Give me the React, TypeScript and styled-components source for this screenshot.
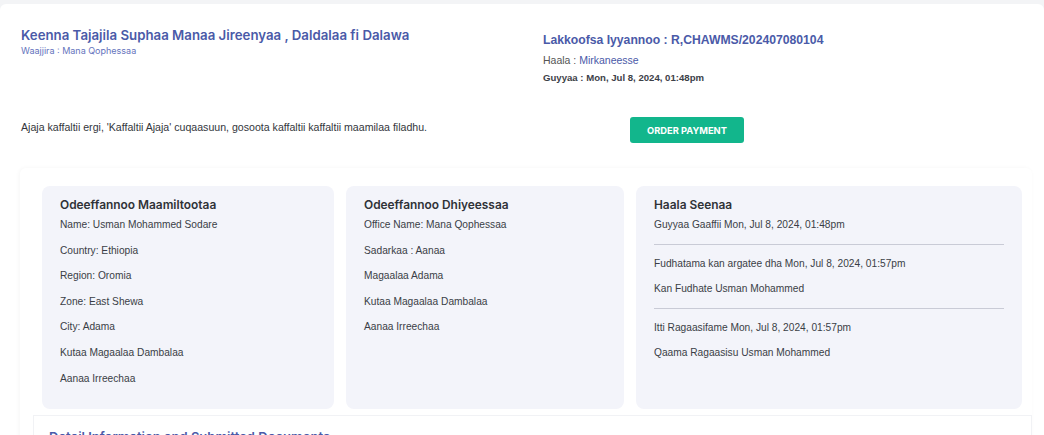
import React from 'react';
import styled, { createGlobalStyle } from 'styled-components';

const colors = {
  blue: '#4a5aa8',
  blueLight: '#6574bd',
  text: '#3a3e46',
  panel: '#f3f4fa',
  green: '#12b68c',
  rule: '#c9cbd6',
};

const GlobalStyle = createGlobalStyle`
  html, body {
    margin: 0;
    padding: 0;
    background: #f3f4f6;
  }
  body {
    font-family: 'Liberation Sans', Arial, sans-serif;
    color: ${colors.text};
  }
  * { box-sizing: border-box; }
`;

const Page = styled.div`
  margin-top: 4px;
  height: 431px;
  overflow: hidden;
  background: white;
  border-radius: 6px 6px 0 0;
`;

const Header = styled.div`
  display: grid;
  grid-template-columns: 522px 1fr;
  padding: 22px 0 0 21px;
`;

const Title = styled.h1`
  margin: 0;
  font-family: Inter, 'Noto Sans', sans-serif;
  font-weight: 600;
  font-size: 13.25px;
  line-height: 18px;
  color: ${colors.blue};
`;

const SubTitle = styled.div`
  margin-top: 1px;
  font-family: Inter, 'Noto Sans', sans-serif;
  font-size: 9px;
  line-height: 12px;
  color: ${colors.blueLight};
`;

const RequestBlock = styled.div`
  padding-top: 6px;
`;

const RequestNumber = styled.div`
  font-weight: 700;
  font-size: 12.2px;
  line-height: 16px;
  color: ${colors.blue};
`;

const Meta = styled.div<{ $bold?: boolean }>`
  margin-top: ${({ $bold }) => ($bold ? '4px' : '5px')};
  font-size: ${({ $bold }) => ($bold ? '9.6px' : '10.5px')};
  font-weight: ${({ $bold }) => ($bold ? 700 : 400)};
  line-height: 14px;
  color: ${({ $bold }) => ($bold ? '#3d4148' : '#555')};
`;

const Status = styled.span`
  color: ${colors.blue};
`;

const ActionRow = styled.div`
  display: grid;
  grid-template-columns: 609px auto;
  align-items: start;
  padding: 32px 0 0 21px;
`;

const Notice = styled.p`
  margin: 3px 0 0;
  font-size: 10.6px;
  line-height: 14px;
  color: #33363c;
`;

const PayButton = styled.button`
  width: 114px;
  height: 26px;
  padding: 0;
  border: none;
  border-radius: 3px;
  background: ${colors.green};
  color: white;
  font-family: Inter, 'Noto Sans', sans-serif;
  font-weight: 700;
  font-size: 9.3px;
  cursor: pointer;
`;

const Section = styled.div`
  margin: 25px 12px 0 20px;
  padding: 18px 10px 0 22px;
  background: white;
  box-shadow: -1px 0 4px rgba(0, 0, 0, 0.04);
  border-radius: 6px 6px 0 0;
`;

const PanelGrid = styled.div`
  display: grid;
  grid-template-columns: 292px 278px 386px;
  column-gap: 12px;
`;

const Panel = styled.div`
  height: 223px;
  padding: 11px 18px 0 18px;
  background: ${colors.panel};
  border-radius: 8px;
`;

const PanelTitle = styled.h3`
  margin: 0 0 6px;
  font-family: Inter, 'Noto Sans', sans-serif;
  font-weight: 600;
  font-size: 11.9px;
  line-height: 15px;
  color: #2f3237;
`;

const Line = styled.div`
  font-size: 10.2px;
  line-height: 14px;
  color: ${colors.text};
  margin-bottom: 11.6px;
`;

const Rule = styled.hr`
  margin: 1px 0 12px;
  border: none;
  border-top: 1px solid ${colors.rule};
`;

const Next = styled.div`
  margin: 6px -10px 0 -9px;
  padding: 13px 0 0 15px;
  border-top: 1px solid #f1f2f5;
  border-left: 1px solid #f1f2f5;
  border-right: 1px solid #f1f2f5;
  font-family: Inter, 'Noto Sans', sans-serif;
  font-weight: 600;
  font-size: 13px;
  line-height: 16px;
  color: ${colors.blue};
`;

const customer = [
  'Name: Usman Mohammed Sodare',
  'Country: Ethiopia',
  'Region: Oromia',
  'Zone: East Shewa',
  'City: Adama',
  'Kutaa Magaalaa Dambalaa',
  'Aanaa Irreechaa',
];

const office = [
  'Office Name: Mana Qophessaa',
  'Sadarkaa : Aanaa',
  'Magaalaa Adama',
  'Kutaa Magaalaa Dambalaa',
  'Aanaa Irreechaa',
];

const history = [
  ['Guyyaa Gaaffii Mon, Jul 8, 2024, 01:48pm'],
  ['Fudhatama kan argatee dha Mon, Jul 8, 2024, 01:57pm', 'Kan Fudhate Usman Mohammed'],
  ['Itti Ragaasifame Mon, Jul 8, 2024, 01:57pm', 'Qaama Ragaasisu Usman Mohammed'],
];

export default function App() {
  return (
    <>
      <GlobalStyle />
      <Page>
        <Header>
          <div>
            <Title>Keenna Tajajila Suphaa Manaa Jireenyaa , Daldalaa fi Dalawa</Title>
            <SubTitle>Waajjira : Mana Qophessaa</SubTitle>
          </div>
          <RequestBlock>
            <RequestNumber>Lakkoofsa Iyyannoo : R,CHAWMS/202407080104</RequestNumber>
            <Meta>
              Haala : <Status>Mirkaneesse</Status>
            </Meta>
            <Meta $bold>Guyyaa : Mon, Jul 8, 2024, 01:48pm</Meta>
          </RequestBlock>
        </Header>

        <ActionRow>
          <Notice>
            Ajaja kaffaltii ergi, 'Kaffaltii Ajaja' cuqaasuun, gosoota kaffaltii kaffaltii maamilaa filadhu.
          </Notice>
          <PayButton>ORDER PAYMENT</PayButton>
        </ActionRow>

        <Section>
          <PanelGrid>
            <Panel>
              <PanelTitle>Odeeffannoo Maamiltootaa</PanelTitle>
              {customer.map((l) => (
                <Line key={l}>{l}</Line>
              ))}
            </Panel>
            <Panel>
              <PanelTitle>Odeeffannoo Dhiyeessaa</PanelTitle>
              {office.map((l) => (
                <Line key={l}>{l}</Line>
              ))}
            </Panel>
            <Panel>
              <PanelTitle>Haala Seenaa</PanelTitle>
              {history.map((group, i) => (
                <React.Fragment key={i}>
                  {i > 0 && <Rule />}
                  {group.map((l) => (
                    <Line key={l}>{l}</Line>
                  ))}
                </React.Fragment>
              ))}
            </Panel>
          </PanelGrid>
          <Next>Detail Information and Submitted Documents</Next>
        </Section>
      </Page>
    </>
  );
}
